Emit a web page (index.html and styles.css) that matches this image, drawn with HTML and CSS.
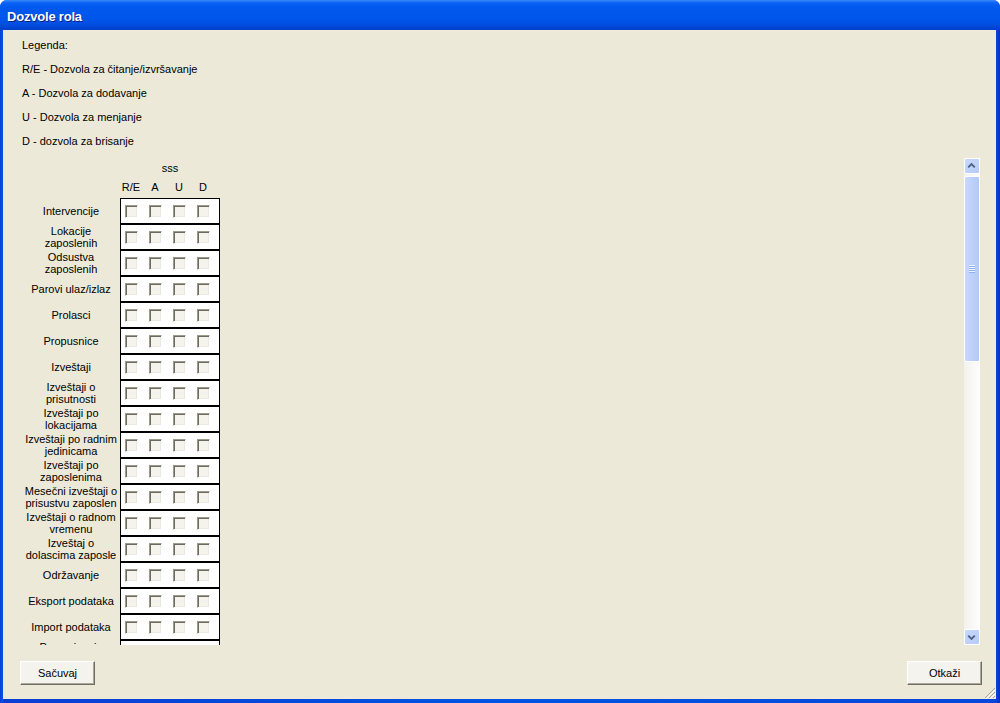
FILE: index.html
```html
<!DOCTYPE html>
<html>
<head>
<meta charset="utf-8">
<link rel="stylesheet" href="styles.css">
</head>
<body>
<div class="window">
  <div class="titlebar"><span class="title">Dozvole rola</span></div>
  <div class="client">
    <div class="legend">
      <div class="legend-line">Legenda:</div>
      <div class="legend-line">R/E - Dozvola za čitanje/izvršavanje</div>
      <div class="legend-line">A - Dozvola za dodavanje</div>
      <div class="legend-line">U - Dozvola za menjanje</div>
      <div class="legend-line">D - dozvola za brisanje</div>
    </div>
    <div class="viewport">
      <div class="scroll-content">
        <div class="group-title">sss</div>
        <div class="col-heads">
          <span class="col-head">R/E</span>
          <span class="col-head">A</span>
          <span class="col-head">U</span>
          <span class="col-head">D</span>
        </div>
        <div class="rows">
          <div class="row"><div class="label">Intervencije</div><div class="cells"><span class="cb"></span><span class="cb"></span><span class="cb"></span><span class="cb"></span></div></div>
          <div class="row"><div class="label">Lokacije<br>zaposlenih</div><div class="cells"><span class="cb"></span><span class="cb"></span><span class="cb"></span><span class="cb"></span></div></div>
          <div class="row"><div class="label">Odsustva<br>zaposlenih</div><div class="cells"><span class="cb"></span><span class="cb"></span><span class="cb"></span><span class="cb"></span></div></div>
          <div class="row"><div class="label">Parovi ulaz/izlaz</div><div class="cells"><span class="cb"></span><span class="cb"></span><span class="cb"></span><span class="cb"></span></div></div>
          <div class="row"><div class="label">Prolasci</div><div class="cells"><span class="cb"></span><span class="cb"></span><span class="cb"></span><span class="cb"></span></div></div>
          <div class="row"><div class="label">Propusnice</div><div class="cells"><span class="cb"></span><span class="cb"></span><span class="cb"></span><span class="cb"></span></div></div>
          <div class="row"><div class="label">Izveštaji</div><div class="cells"><span class="cb"></span><span class="cb"></span><span class="cb"></span><span class="cb"></span></div></div>
          <div class="row"><div class="label">Izveštaji o<br>prisutnosti</div><div class="cells"><span class="cb"></span><span class="cb"></span><span class="cb"></span><span class="cb"></span></div></div>
          <div class="row"><div class="label">Izveštaji po<br>lokacijama</div><div class="cells"><span class="cb"></span><span class="cb"></span><span class="cb"></span><span class="cb"></span></div></div>
          <div class="row"><div class="label">Izveštaji po radnim<br>jedinicama</div><div class="cells"><span class="cb"></span><span class="cb"></span><span class="cb"></span><span class="cb"></span></div></div>
          <div class="row"><div class="label">Izveštaji po<br>zaposlenima</div><div class="cells"><span class="cb"></span><span class="cb"></span><span class="cb"></span><span class="cb"></span></div></div>
          <div class="row"><div class="label">Mesečni izveštaji o<br>prisustvu zaposlen</div><div class="cells"><span class="cb"></span><span class="cb"></span><span class="cb"></span><span class="cb"></span></div></div>
          <div class="row"><div class="label">Izveštaji o radnom<br>vremenu</div><div class="cells"><span class="cb"></span><span class="cb"></span><span class="cb"></span><span class="cb"></span></div></div>
          <div class="row"><div class="label">Izveštaj o<br>dolascima zaposle</div><div class="cells"><span class="cb"></span><span class="cb"></span><span class="cb"></span><span class="cb"></span></div></div>
          <div class="row"><div class="label">Održavanje</div><div class="cells"><span class="cb"></span><span class="cb"></span><span class="cb"></span><span class="cb"></span></div></div>
          <div class="row"><div class="label">Eksport podataka</div><div class="cells"><span class="cb"></span><span class="cb"></span><span class="cb"></span><span class="cb"></span></div></div>
          <div class="row"><div class="label">Import podataka</div><div class="cells"><span class="cb"></span><span class="cb"></span><span class="cb"></span><span class="cb"></span></div></div>
          <div class="row"><div class="label label-top">Prosecivanje</div><div class="cells"><span class="cb"></span><span class="cb"></span><span class="cb"></span><span class="cb"></span></div></div>
        </div>
      </div>
      <div class="scrollbar">
        <div class="sb-btn">
          <svg width="16" height="16" viewBox="0 0 16 16"><path d="M4.5 9.5 L8 6 L11.5 9.5" fill="none" stroke="#4d6185" stroke-width="2"/></svg>
        </div>
        <div class="sb-thumb">
          <svg width="8" height="8" viewBox="0 0 8 8"><path d="M1 1.5h6M1 3.5h6M1 5.5h6M1 7.5h6" stroke="#8cb0f8" stroke-width="1"/><path d="M1 0.5h6M1 2.5h6M1 4.5h6M1 6.5h6" stroke="#eef4fe" stroke-width="1"/></svg>
        </div>
        <div class="sb-track"></div>
        <div class="sb-btn">
          <svg width="16" height="16" viewBox="0 0 16 16"><path d="M4.5 6.5 L8 10 L11.5 6.5" fill="none" stroke="#4d6185" stroke-width="2"/></svg>
        </div>
      </div>
    </div>
    <div class="footer">
      <button class="btn">Sačuvaj</button>
      <button class="btn">Otkaži</button>
    </div>
    <div class="grip">
      <svg width="12" height="12" viewBox="0 0 12 12">
        <path d="M11 1 L1 11 M11 5 L5 11 M11 9 L9 11" stroke="#a9a594" stroke-width="1"/>
        <path d="M12 2 L2 12 M12 6 L6 12 M12 10 L10 12" stroke="#ffffff" stroke-width="1"/>
      </svg>
    </div>
  </div>
</div>
</body>
</html>
```
FILE: styles.css
```css
html, body {
  margin: 0;
  padding: 0;
}
body {
  width: 1000px;
  height: 703px;
  overflow: hidden;
  font-family: "Liberation Sans", Arial, sans-serif;
  font-size: 11px;
  color: #000;
}
.window {
  width: 1000px;
  height: 703px;
  display: flex;
  flex-direction: column;
  background: linear-gradient(90deg, #0a3ed3 0, #0054e3 2px, #0a3ed3 4px, #0054e3 50%, #0847d9 996px, #0a2fc2 1000px);
  border-radius: 7px 7px 0 0;
  box-sizing: border-box;
}
.titlebar {
  height: 30px;
  flex: none;
  display: flex;
  align-items: center;
  padding: 2px 0 0 7px;
  box-sizing: border-box;
  border-radius: 7px 7px 0 0;
  background: linear-gradient(180deg, #3a8cf5 0, #2a7af8 1px, #0a62f5 3px, #0058ee 7px, #0056eb 18px, #004fe2 24px, #0046d6 27px, #003fc9 30px);
}
.title {
  color: #fff;
  font-family: "Liberation Sans", Arial, sans-serif;
  font-weight: bold;
  font-size: 13px;
  letter-spacing: -0.2px;
  text-shadow: 1px 1px 0 #0a1e80;
}
.client {
  position: relative;
  flex: 1;
  margin: 0 4px 4px 3px;
  background: #ece9d8;
  display: flex;
  flex-direction: column;
  padding: 3px 16px 0 19px;
  min-height: 0;
}
.legend-line {
  line-height: 24px;
  height: 24px;
  white-space: nowrap;
}
.viewport {
  margin-top: 5px;
  height: 487px;
  flex: none;
  display: flex;
}
.scroll-content {
  flex: 1;
  overflow: hidden;
  padding-top: 4px;
}
.group-title {
  width: 100px;
  margin-left: 98px;
  text-align: center;
  line-height: 13px;
  height: 13px;
}
.col-heads {
  display: flex;
  margin-left: 97px;
  margin-top: 6px;
  height: 13px;
  line-height: 13px;
}
.col-head {
  width: 24px;
  text-align: center;
}
.rows {
  margin-top: 4px;
}
.row {
  display: flex;
  height: 26px;
}
.label {
  width: 98px;
  height: 26px;
  overflow: hidden;
  display: flex;
  align-items: center;
  justify-content: center;
  text-align: center;
  line-height: 12px;
  white-space: nowrap;
}
.label-top {
  align-items: flex-start;
  padding-top: 1px;
  box-sizing: border-box;
}
.cells {
  width: 100px;
  height: 26px;
  box-sizing: border-box;
  border: 1px solid #000;
  background: #fff;
  display: flex;
  align-items: center;
  gap: 11px;
  padding-left: 4px;
}
.cb {
  width: 13px;
  height: 13px;
  box-sizing: border-box;
  border: 1px solid;
  border-color: #9d9a8c #ffffff #ffffff #9d9a8c;
  box-shadow: inset 1px 1px 0 #6d6b60, inset -1px -1px 0 #ebe9df;
  background: #f4f3ec;
  flex: none;
}
.scrollbar {
  width: 16px;
  flex: none;
  display: flex;
  flex-direction: column;
  background: linear-gradient(90deg, #f3f1ec, #fefefe);
}
.sb-btn {
  height: 16px;
  flex: none;
  box-sizing: border-box;
  border: 1px solid #fff;
  border-radius: 2px;
  background: linear-gradient(135deg, #c8d8fb, #b6cbf7);
  display: flex;
  align-items: center;
  justify-content: center;
}
.sb-btn svg {
  display: block;
  margin-left: -1px;
}
.sb-thumb {
  margin-top: 2px;
  height: 186px;
  flex: none;
  box-sizing: border-box;
  border: 1px solid #fff;
  border-radius: 2px;
  background: linear-gradient(90deg, #c9d8fc, #bccffa 60%, #b3c8f7);
  display: flex;
  align-items: center;
  justify-content: center;
}
.sb-track {
  flex: 1;
}
.footer {
  display: flex;
  justify-content: space-between;
  margin-top: 16px;
  padding-right: 0;
  margin-right: -2px;
  margin-left: -2px;
}
.btn {
  width: 75px;
  height: 24px;
  box-sizing: border-box;
  font-family: "Liberation Sans", Arial, sans-serif;
  font-size: 11px;
  color: #000;
  background: #f4f3ee;
  border: 1px solid;
  border-color: #ffffff #716f64 #716f64 #ffffff;
  box-shadow: inset -1px -1px 0 #aca899;
  padding: 0;
  border-radius: 0;
}
.grip {
  position: absolute;
  right: 0;
  bottom: 0;
  width: 12px;
  height: 12px;
}
.grip svg {
  display: block;
}
```
